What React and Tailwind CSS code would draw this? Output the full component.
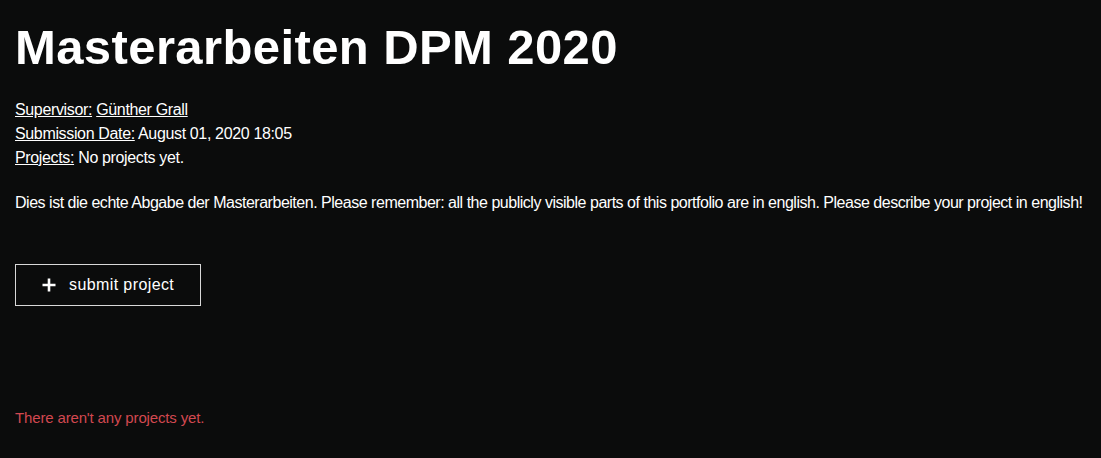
import React from "react";

export default function App() {
  return (
    <div className="min-h-[458px] w-full bg-[#0b0c0c] text-white px-[15px] pt-[18px]" style={{ fontFamily: '"Liberation Sans", Arial, sans-serif' }}>
      <h1 className="text-[49px] font-bold leading-[58px] tracking-[0.4px]">Masterarbeiten DPM 2020</h1>
      <div className="mt-[22px] text-[16px] leading-[24px] tracking-[-0.35px]">
        <div><span className="underline">Supervisor:</span> <span className="underline">Günther Grall</span></div>
        <div><span className="underline">Submission Date:</span> August 01, 2020 18:05</div>
        <div><span className="underline">Projects:</span> No projects yet.</div>
      </div>
      <p className="mt-[21px] text-[16px] leading-[24px] tracking-[-0.48px]">Dies ist die echte Abgabe der Masterarbeiten. Please remember: all the publicly visible parts of this portfolio are in english. Please describe your project in english!</p>
      <button className="mt-[49px] flex items-center h-[42px] w-[186px] border border-[#d9d9d9] pl-[25px] text-[16px] tracking-[0.4px]">
        <svg width="16" height="16" viewBox="0 0 16 16" className="mr-[12px]">
          <path d="M8 1.5v13M1.5 8h13" stroke="white" strokeWidth="2.6" />
        </svg>
        submit project
      </button>
      <p className="mt-[100px] text-[15px] leading-[24px] tracking-[-0.15px] text-[#d24850]">There aren't any projects yet.</p>
    </div>
  );
}
